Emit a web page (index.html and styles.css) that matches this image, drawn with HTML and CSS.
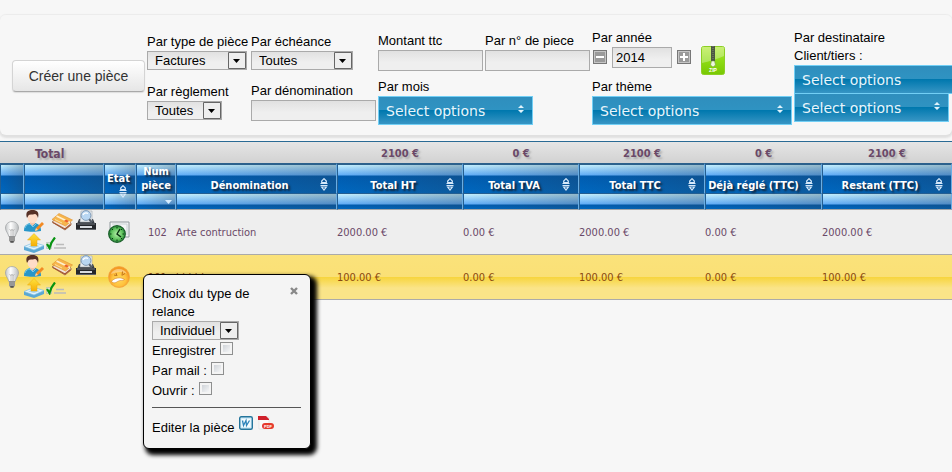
FILE: index.html
```
<!DOCTYPE html>
<html lang="fr">
<head>
    <meta charset="UTF-8">
    <meta name="viewport" content="width=device-width, initial-scale=1.0">
    <title>Pièces</title>
    <link rel="stylesheet" href="styles.css">
</head>
<body>
    <svg class="sprite" aria-hidden="true">
        <defs>
            <linearGradient id="gold" x1="0" y1="0" x2="0" y2="1"><stop offset="0" stop-color="#ffe23c"/><stop offset="1" stop-color="#f5ae08"/></linearGradient>
            <linearGradient id="glass" x1="0" y1="0" x2="1" y2="0"><stop offset="0" stop-color="#c3c6c8"/><stop offset=".4" stop-color="#fff"/><stop offset="1" stop-color="#b8bbbd"/></linearGradient>
            <linearGradient id="lime" x1="0" y1="0" x2="0" y2="1"><stop offset="0" stop-color="#b4ea3c"/><stop offset=".5" stop-color="#8edc14"/><stop offset="1" stop-color="#78c803"/></linearGradient>
            <radialGradient id="clockface"><stop offset="0" stop-color="#b6f0aa"/><stop offset=".7" stop-color="#5cc05a"/><stop offset="1" stop-color="#1f7a33"/></radialGradient>
            <radialGradient id="face" cx=".5" cy=".6"><stop offset="0" stop-color="#ffd95c"/><stop offset=".65" stop-color="#ffc23e"/><stop offset="1" stop-color="#f59a22"/></radialGradient>
        </defs>
        <symbol id="bulb" viewBox="0 0 14 22">
            <path d="M7 .6C3 .6.5 3.5.5 7c0 3 2.600 5 3.300 8.500h6.400C10.900 12 13.500 10 13.500 7 13.500 3.500 11 .6 7 .6z" fill="url(#glass)" stroke="#a2a5a7" stroke-width=".8"/>
            <path d="M4.500 8l1.500 2 1-2 1 2 1.500-2M6 10v5M8 10v5" fill="none" stroke="#aaa" stroke-width=".7"/>
            <path d="M4 15.500h6v4L8.500 21.500h-3L4 19.500z" fill="#777"/>
            <path d="M4 17h6M4 19h6" stroke="#d5d5d5" stroke-width=".7"/>
            <path d="M5.500 20.500h3v1h-3z" fill="#333"/>
        </symbol>
        <symbol id="user" viewBox="0 0 20 22">
            <path d="M0 21c0-5 2-7 6-8h5c4 1 6 3 6 8-5 1-12 1-17 0z" fill="#2796c9"/>
            <path d="M1 18c1-3 3-4 5-4l3 3 3-3" fill="none" stroke="#72c6e6"/>
            <path d="M6 10h5v3.500L8.500 16 6 13.500z" fill="#f3c5ac"/>
            <ellipse cx="8.500" cy="7.500" rx="5" ry="5.500" fill="#ffdcc7"/>
            <path d="M3 8C1 2 4 0 8.500 0S15.500 2 14 8c-1-3-2-4-3-4C8 5 5 4 4.500 5.500z" fill="#573126"/>
            <path d="M11 21l1-3 6-6 2 2-6 6z" fill="#f28a23"/>
            <path d="M11 21l1-3 2 2z" fill="#f8d7aa"/>
        </symbol>
        <symbol id="cards" viewBox="0 0 22 18">
            <path d="M1 9l13 8 6-5v-2L8 4z" fill="#f1e4da" stroke="#8a4e28" stroke-width=".7"/>
            <path d="M2 9.500l12 6.500 5.500-4.500" fill="none" stroke="#a55632" stroke-width="1.300"/>
            <path d="M1 6.500L8 .5 21.500 7 14.500 13z" fill="#f6b54c" stroke="#e0902e" stroke-width=".6"/>
            <path d="M5.500 3l13.500 6.500" stroke="#fff0cf" stroke-width="1.500"/>
            <path d="M15 6.500l3 1.500-2 1.500-3-1.500z" fill="#ed602a"/>
            <path d="M4 6.500l7 3.500" stroke="#fbe0a0"/>
        </symbol>
        <symbol id="printer" viewBox="0 0 20 21">
            <path d="M3 9h14l2 5H1z" fill="#363b42"/>
            <path d="M5 1h11v11H4z" fill="#e9edf0" stroke="#9da4ab" stroke-width=".6"/>
            <path d="M0 13h20v6H0z" fill="#25272b"/>
            <path d="M1 14h18" stroke="#737981"/>
            <path d="M4 16h12v2H4z" fill="#d7dbe0"/>
            <path d="M0 19.500h20" stroke="#62666c"/>
            <path d="M13 9l3 3.500" stroke="#555c66" stroke-width="2"/>
            <circle cx="10" cy="5.500" r="4.900" fill="#b8d6f2" stroke="#829bb6"/>
            <path d="M7 5c1-2 3-2.500 5-1.500" fill="none" stroke="#fff" stroke-width="1.300"/>
        </symbol>
        <symbol id="upload" viewBox="0 0 20 20">
            <path d="M0 14l10-4 10 3v3l-10 4-10-3z" fill="#5ba8d4"/>
            <path d="M0 13.500L10 9.500l10 3-10 4.500z" fill="#e3f4fd" stroke="#83c0e3" stroke-width=".7"/>
            <path d="M4 13.500l6-2 6 1.500-6 2z" fill="#a4d4f0"/>
            <path d="M10 .5L16.500 7H13v6H7V7H3.500z" fill="url(#gold)" stroke="#eba80d" stroke-width=".5"/>
        </symbol>
        <symbol id="check" viewBox="0 0 21 13">
            <path d="M.5 5.500h5v6h-5z" fill="#dceadf" stroke="#aab5ac" stroke-width=".6"/>
            <path d="M1 7l2.500 4Q5 5 9 .5" fill="none" stroke="#079311" stroke-width="2.200"/>
            <path d="M10 7.500h8M8 11h12" stroke="#bbb" stroke-width="1.400"/>
        </symbol>
        <symbol id="clock" viewBox="0 0 22 22">
            <path d="M2 1h19v15H2z" fill="#f3f4f5" stroke="#929a9e"/>
            <path d="M4 3h15v11" fill="none" stroke="#cbd2d5"/>
            <circle cx="9" cy="13" r="8.300" fill="url(#clockface)" stroke="#175d27" stroke-width="1.200"/>
            <path d="M9 6v1.500M9 18.500V20M2 13h1.500M14.500 13H16M4 8l1 1M14 18l-1-1M4 18l1-1M14 8l-1 1" stroke="#093a12"/>
            <path d="M12 8l-3 5 4 3" fill="none" stroke="#082d0e" stroke-width="1.400"/>
        </symbol>
        <symbol id="sad" viewBox="0 0 22 22">
            <circle cx="11" cy="11" r="10.500" fill="url(#face)" stroke="#f0a040" stroke-width=".7"/>
            <path d="M3 8C5 2 16 1 19 8 14 5 9 6 3 8z" fill="#fff" opacity=".35"/>
            <path d="M8 7l1 3M14.500 5.500L14 9.500M6 9l2.500 .5M14.500 9l2.500-1.500" fill="none" stroke="#b8691a" stroke-width=".9"/>
            <path d="M3.500 15.500c2-3.500 9-5 13-2-1.500 1.500-4 .5-6 1.500-3 1.500-4 3-7 .5z" fill="#fff" stroke="#c9752a" stroke-width=".5"/>
        </symbol>
        <symbol id="sort" viewBox="0 0 8 13">
            <path d="M4 .7L6.300 3v1.500H1.700V3zM.5 5.500h7M.5 7.500h7M1.700 9h4.600L4 12z" fill="none" stroke="#d5e8fa" stroke-width="1.200"/>
        </symbol>
    </svg>

    <div class="page">
        <form class="filters">
            <button type="button" class="create">Créer une pièce</button>
            <div class="field">
                <label for="type">Par type de pièce</label>
                <select id="type" class="w100"><option>Factures</option></select>
            </div>
            <div class="field">
                <label for="echeance">Par échéance</label>
                <select id="echeance" class="w102"><option>Toutes</option></select>
            </div>
            <div class="field">
                <label for="montant">Montant ttc</label>
                <input type="text" id="montant" class="w105">
            </div>
            <div class="field">
                <label for="numero">Par n° de piece</label>
                <input type="text" id="numero" class="w105">
            </div>
            <div class="field">
                <div class="year">
                    <div class="field">
                        <label for="annee">Par année</label>
                        <div class="stepper">
                            <button type="button" aria-label="Moins"><svg width="14" height="14" viewBox="0 0 14 14"><path d="M3 7h8" stroke="#fff" stroke-width="2"/></svg></button>
                            <input type="text" id="annee" value="2014">
                            <button type="button" aria-label="Plus"><svg width="14" height="14" viewBox="0 0 14 14"><path d="M3 7h8M7 3v8" stroke="#fff" stroke-width="2"/></svg></button>
                        </div>
                    </div>
                    <a href="#" class="zip" aria-label="Zip"><svg width="24" height="29" viewBox="0 0 24 29">
                        <rect x=".5" y=".5" width="23" height="28" rx="2" fill="url(#lime)" stroke="#8ccf24"/>
                        <path d="M1 1h22v9Q14 14 1 17z" fill="#fff" opacity=".3"/>
                        <path d="M12 0v15" stroke="#4b5741" stroke-width="4"/>
                        <path d="M12 0v14" stroke="#7d8a73" stroke-dasharray="1 1"/>
                        <path d="M10.500 15h3l1 4-2.500 2-2.500-2z" fill="#eef8df" stroke="#79a044" stroke-width=".6"/>
                        <text x="12" y="26" text-anchor="middle">ZIP</text>
                    </svg></a>
                </div>
            </div>
            <div class="field recipient">
                <label for="client">Par destinataire<br>Client/tiers :</label>
                <button type="button" id="client" class="multi w200"><span>Select options</span><svg width="6" height="8" viewBox="0 0 6 8"><path d="M0 3l3-3 3 3zM0 5l3 3 3-3z"/></svg></button>
                <button type="button" class="multi w155"><span>Select options</span><svg width="6" height="8" viewBox="0 0 6 8"><path d="M0 3l3-3 3 3zM0 5l3 3 3-3z"/></svg></button>
            </div>
            <div class="field">
                <label for="reglement">Par règlement</label>
                <select id="reglement" class="w75"><option>Toutes</option></select>
            </div>
            <div class="field">
                <label for="denomination">Par dénomination</label>
                <input type="text" id="denomination" class="w125">
            </div>
            <div class="field months">
                <label for="mois">Par mois</label>
                <button type="button" id="mois" class="multi w155"><span>Select options</span><svg width="6" height="8" viewBox="0 0 6 8"><path d="M0 3l3-3 3 3zM0 5l3 3 3-3z"/></svg></button>
            </div>
            <div class="field">
                <label for="theme">Par thème</label>
                <button type="button" id="theme" class="multi w200"><span>Select options</span><svg width="6" height="8" viewBox="0 0 6 8"><path d="M0 3l3-3 3 3zM0 5l3 3 3-3z"/></svg></button>
            </div>
        </form>

        <table class="list">
            <colgroup>
                <col class="c-bulb"><col class="c-actions"><col class="c-state"><col class="c-num"><col class="c-name">
                <col class="c-total"><col class="c-tva"><col class="c-total"><col class="c-paid"><col>
            </colgroup>
            <thead>
                <tr class="totals">
                    <td colspan="3" class="total-label">Total</td>
                    <td></td>
                    <td></td>
                    <td>2100 €</td>
                    <td>0 €</td>
                    <td>2100 €</td>
                    <td>0 €</td>
                    <td>2100 €</td>
                </tr>
                <tr class="head">
                    <th></th>
                    <th></th>
                    <th class="state">Etat<svg class="sort"><use href="#sort"/></svg></th>
                    <th class="num">Num pièce</th>
                    <th>Dénomination<svg class="sort"><use href="#sort"/></svg></th>
                    <th>Total HT<svg class="sort"><use href="#sort"/></svg></th>
                    <th>Total TVA<svg class="sort"><use href="#sort"/></svg></th>
                    <th>Total TTC<svg class="sort"><use href="#sort"/></svg></th>
                    <th class="tight">Déjà réglé (TTC)<svg class="sort"><use href="#sort"/></svg></th>
                    <th>Restant (TTC)<svg class="sort"><use href="#sort"/></svg></th>
                </tr>
                <tr class="subhead">
                    <td></td><td></td><td></td>
                    <td><svg class="desc" width="7" height="4" viewBox="0 0 7 4"><path d="M0 0h7L3.500 4z" fill="#d5ecff"/></svg></td>
                    <td></td><td></td><td></td><td></td><td></td><td></td>
                </tr>
            </thead>
            <tbody>
                <tr>
                    <td class="bulb"><svg width="14" height="22"><use href="#bulb"/></svg></td>
                    <td class="tools"><div class="actions">
                        <a href="#" aria-label="Client"><svg width="20" height="22"><use href="#user"/></svg></a>
                        <a href="#" aria-label="Paiement"><svg width="22" height="18"><use href="#cards"/></svg></a>
                        <a href="#" aria-label="Imprimer"><svg width="20" height="21"><use href="#printer"/></svg></a>
                        <a href="#" aria-label="Envoyer"><svg width="20" height="20"><use href="#upload"/></svg></a>
                        <a href="#" aria-label="Valider"><svg width="21" height="13"><use href="#check"/></svg></a>
                    </div></td>
                    <td class="icon"><svg width="22" height="22"><use href="#clock"/></svg></td>
                    <td class="id">102</td>
                    <td class="name">Arte contruction</td>
                    <td>2000.00 €</td>
                    <td>0.00 €</td>
                    <td>2000.00 €</td>
                    <td>0.00 €</td>
                    <td>2000.00 €</td>
                </tr>
                <tr class="selected">
                    <td class="bulb"><svg width="14" height="22"><use href="#bulb"/></svg></td>
                    <td class="tools"><div class="actions">
                        <a href="#" aria-label="Client"><svg width="20" height="22"><use href="#user"/></svg></a>
                        <a href="#" aria-label="Paiement"><svg width="22" height="18"><use href="#cards"/></svg></a>
                        <a href="#" aria-label="Imprimer"><svg width="20" height="21"><use href="#printer"/></svg></a>
                        <a href="#" aria-label="Envoyer"><svg width="20" height="20"><use href="#upload"/></svg></a>
                        <a href="#" aria-label="Valider"><svg width="21" height="13"><use href="#check"/></svg></a>
                    </div></td>
                    <td class="icon"><svg width="22" height="22"><use href="#sad"/></svg></td>
                    <td class="id">101</td>
                    <td class="name">hhhhh</td>
                    <td>100.00 €</td>
                    <td>0.00 €</td>
                    <td>100.00 €</td>
                    <td>0.00 €</td>
                    <td>100.00 €</td>
                </tr>
            </tbody>
        </table>

        <div class="popup" role="dialog">
            <button type="button" class="close" aria-label="Fermer"><svg width="8" height="8" viewBox="0 0 8 8"><path d="M1 1l6 6M7 1L1 7" stroke="#888" stroke-width="2.400"/></svg></button>
            <label for="relance">Choix du type de relance</label>
            <select id="relance" class="w87"><option>Individuel</option></select>
            <div class="line"><label for="enregistrer">Enregistrer</label><input type="checkbox" id="enregistrer"></div>
            <div class="line"><label for="mail">Par mail :</label><input type="checkbox" id="mail"></div>
            <div class="line"><label for="ouvrir">Ouvrir :</label><input type="checkbox" id="ouvrir"></div>
            <hr>
            <div class="edit">
                <span>Editer la pièce</span>
                <a href="#" aria-label="Word"><svg width="14" height="14" viewBox="0 0 14 14">
                    <rect x=".7" y=".7" width="12.600" height="12.600" rx="1.500" fill="#d4edf9" stroke="#24759c" stroke-width="1.400"/>
                    <rect x="2.500" y="3" width="9" height="8" fill="#f5fcff"/>
                    <path d="M3.500 4.500l1 5 2.500-5 .5 5 3-5" fill="none" stroke="#2c83ba" stroke-width="1.300"/>
                </svg></a>
                <a href="#" aria-label="PDF"><svg width="16" height="14" viewBox="0 0 16 14">
                    <path d="M1 1h10v12H1z" fill="#fafafa" stroke="#ddd" stroke-width=".6"/>
                    <path d="M0 0h8l3 3v1H0z" fill="#cf202b"/>
                    <rect x="4" y="7" width="12" height="6" rx="3" fill="#e53a2c"/>
                    <text x="10" y="12" text-anchor="middle">PDF</text>
                </svg></a>
            </div>
        </div>
    </div>
</body>
</html>
```
FILE: styles.css
```
* {
    box-sizing: border-box;
}

body {
    margin: 0;
    background: #f7f7f7;
    font-family: "Liberation Sans", Arial, sans-serif;
    font-size: 13px;
    line-height: 18px;
    color: #000;
}

.sprite {
    position: absolute;
    width: 0;
    height: 0;
}

svg {
    display: block;
}

.page {
    position: relative;
    padding-top: 14px;
    overflow: hidden;
    min-height: 100vh;
}

/* filters */
.filters {
    display: grid;
    grid-template-columns: 133px 102px 125px 105px 105px 200px 1fr;
    grid-template-rows: 49px 46px;
    column-gap: 2px;
    row-gap: 2px;
    align-items: center;
    padding: 12px 0 11px 12px;
    border-top: 1px solid #ececec;
    border-radius: 6px;
    box-shadow: 0 2px 2px 1px #e0e0e0;
    margin-bottom: 6px;
}

.create {
    grid-row: 1 / 3;
    height: 32px;
    padding: 0;
    border: 1px solid #d4d4d4;
    border-bottom-color: #a9a9a9;
    border-radius: 4px;
    background: linear-gradient(#fff, #e6e6e6);
    box-shadow: 0 1px 1px #ddd;
    font: 14px/20px "Liberation Sans", Arial, sans-serif;
    color: #333;
}

.field {
    display: flex;
    flex-direction: column;
    align-items: flex-start;
    white-space: nowrap;
}

.recipient {
    grid-row: 1 / 3;
    grid-column: 7;
}

.months {
    grid-column: 4 / 6;
}

.w75 { width: 75px; }
.w87 { width: 87px; }
.w100 { width: 100px; }
.w102 { width: 102px; }
.w105 { width: 105px; }
.w125 { width: 125px; }
.w155 { width: 155px; }
.w200 { width: 200px; }

input[type="text"] {
    height: 21px;
    padding: 0 3px;
    border: 1px solid #aaa;
    background: linear-gradient(#e1e1e1, #efefef 60%);
    font: 13px/18px "Liberation Sans", Arial, sans-serif;
    color: #000;
}

select {
    appearance: none;
    height: 19px;
    padding: 0 20px 0 7px;
    border: 1px solid #aaa;
    border-radius: 0;
    background:
        url("data:image/svg+xml,%3Csvg xmlns='http://www.w3.org/2000/svg' width='18' height='17'%3E%3Cpath d='M.5.500h17v16H.5z' fill='%23eee' stroke='%23666'/%3E%3Cpath d='M5 7h7L8.500 11z'/%3E%3C/svg%3E") right top no-repeat,
        linear-gradient(#e1e1e1, #efefef 60%);
    font: 13px/17px "Liberation Sans", Arial, sans-serif;
    color: #000;
}

.year {
    display: flex;
    gap: 10px;
    align-items: flex-end;
}

.year > .field {
    padding-bottom: 7px;
}

.stepper {
    display: flex;
    gap: 5px;
    align-items: center;
    padding-left: 1px;
}

.stepper input {
    width: 60px;
}

.stepper button {
    padding: 0;
    border: 0;
    background: #9a9a9a;
    box-shadow: inset 0 0 0 1px #777, inset 0 0 0 2px #c5c5c5;
}

.zip text {
    font: bold 5px "Liberation Sans", sans-serif;
    fill: #fff;
}

.multi {
    display: flex;
    justify-content: space-between;
    height: 29px;
    padding: 4px 8px 0 7px;
    border: 1px solid #72cff5;
    background: linear-gradient(#2f8ebd 0, #2f93c2 48%, #0078ae 50%, #3795c4 100%);
    font: 14px/20px "DejaVu Sans", Verdana, sans-serif;
    color: #e8f5fb;
}

.multi svg {
    margin-top: 4px;
    fill: #e0f3fc;
}

/* the two buttons share an edge */
.recipient .multi + .multi {
    margin-top: -1px;
}

/* list */
.list {
    width: 100%;
    table-layout: fixed;
    border-collapse: separate;
    border-spacing: 0;
    border-top: 1px solid #2a6a94;
    font: 11px/14px "DejaVu Sans Condensed", Tahoma, sans-serif;
    color: #6a4968;
}

.list td,
.list th {
    padding: 0;
}

.c-bulb { width: 24px; }
.c-actions { width: 80px; }
.c-state { width: 32px; }
.c-num { width: 40px; }
.c-name { width: 161px; }
.c-total { width: 126px; }
.c-tva { width: 116px; }
.c-paid { width: 117px; }

.totals td {
    height: 21px;
    padding-top: 2px;
    background: linear-gradient(#e5e5e5, #d2d2d2);
    font-weight: bold;
    text-align: center;
    text-shadow: 2px 2px 2px #aaa;
}

.list .total-label {
    padding-left: 35px;
    font-size: 12px;
    text-align: left;
}

.head th {
    position: relative;
    height: 31px;
    padding-top: 14px;
    padding-right: 14px;
    border-top: 2px solid #2c618c;
    border-left: 1px solid #245e91;
    border-right: 1px solid #69aee4;
    border-bottom: 1px solid #245e91;
    background:
        linear-gradient(90deg, transparent, rgba(40, 60, 80, .3)),
        linear-gradient(#c4f0ff 0, #62aef8 10px, #005cb0 11px, #0068c0 100%);
    color: #fff;
    text-shadow: 2px 2px 2px #123;
}

.list .head th {
    padding: 14px 14px 0 0;
}

.list .head .tight {
    padding-right: 20px;
    white-space: nowrap;
}

.list .head .state {
    padding: 0 3px 0 0;
}

.list .head .num {
    padding: 0;
    line-height: 14px;
}

.sort {
    position: absolute;
    right: 8px;
    top: 13px;
    width: 8px;
    height: 13px;
}

.state .sort {
    top: 20px;
    z-index: 1;
}

.subhead td {
    height: 16px;
    border-left: 1px solid #245e91;
    border-right: 1px solid #69aee4;
    border-bottom: 1px solid #a5a5a5;
    background:
        linear-gradient(90deg, transparent, rgba(40, 60, 80, .3)),
        linear-gradient(#c4f0ff 0, #62aef8 10px, #005cb0 11px, #0068c0 100%);
}

.desc {
    margin-left: 28px;
}

.list tbody td {
    height: 45px;
    padding-top: 2px;
    border-bottom: 1px solid #aaa;
    background: #eee;
}

.list tbody .selected td {
    background: linear-gradient(#fae27a 0, #fae076 50%, #f7d53f 51%, #fae488 75%, #fae488 100%);
    color: #8b4a10;
}

.list tbody .bulb {
    padding: 0 0 0 5px;
}

.list tbody .tools {
    padding: 0;
}

.actions {
    display: grid;
    grid-template-columns: 20px 22px 20px;
    grid-template-rows: 22px 20px;
    column-gap: 5px;
    row-gap: 1px;
    height: 44px;
}

.actions a:nth-child(2) {
    padding-top: 3px;
    margin-left: 2px;
}

.actions a:nth-child(5) {
    margin-left: -3px;
    padding-top: 4px;
}

.list tbody .icon {
    padding: 0 0 0 4px;
}

.list tbody .id {
    padding-left: 12px;
}

/* relance */
.popup {
    position: absolute;
    left: 143px;
    top: 274px;
    width: 168px;
    padding: 10px 9px 11px 8px;
    border: 1px solid #000;
    border-radius: 6px;
    background: #f4f4f4;
    box-shadow: 4px 4px 4px 2px #000;
}

.popup > label {
    display: block;
    padding-right: 40px;
}

.close {
    position: absolute;
    right: 12px;
    top: 12px;
    padding: 0;
    border: 0;
    background: none;
}

.popup select {
    display: block;
}

.line {
    display: flex;
    gap: 4px;
    height: 20px;
    padding-top: 2px;
}

.line input {
    appearance: none;
    width: 13px;
    height: 13px;
    margin: 0;
    border: 1px solid #8e8f8f;
    background: linear-gradient(135deg, #c5cad0, #fff);
    box-shadow: inset 0 0 0 2px #f4f4f4;
}

.popup hr {
    margin: 7px 0 8px;
    border: 0;
    border-top: 1px solid #555;
}

.edit {
    display: flex;
    gap: 5px;
}

.edit span {
    padding-top: 3px;
}

.edit text {
    font: bold 4px "Liberation Sans", sans-serif;
    fill: #fff;
}
```
